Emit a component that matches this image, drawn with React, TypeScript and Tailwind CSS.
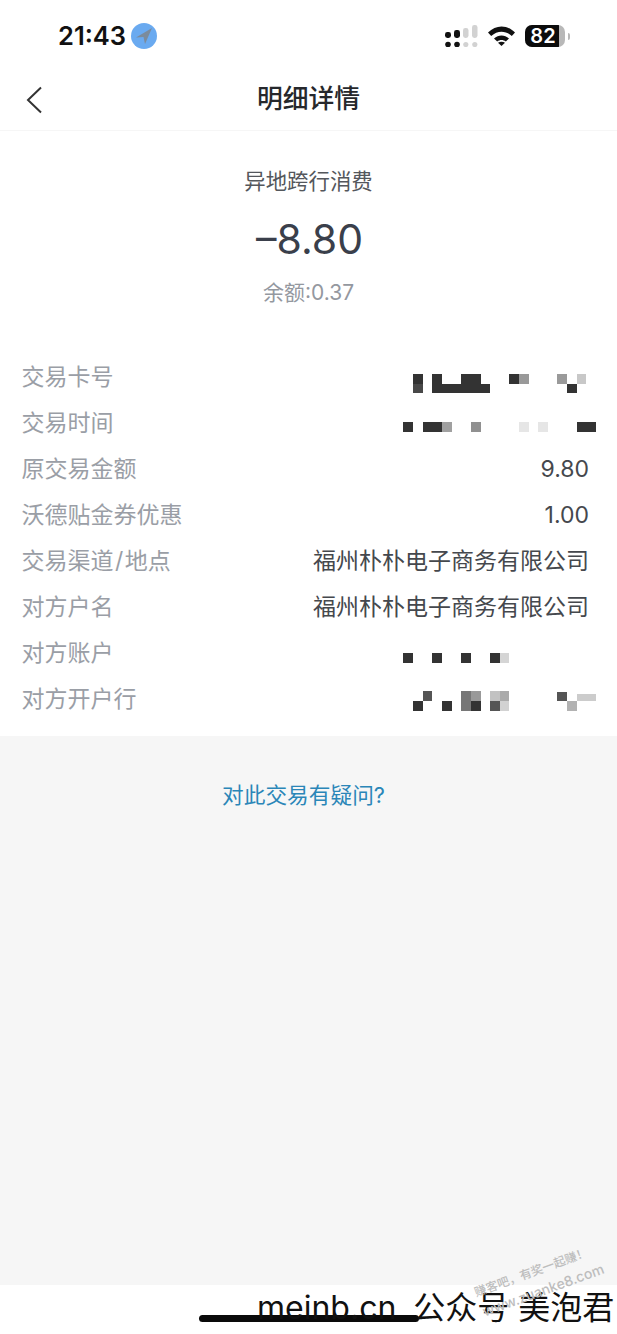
import React from 'react';

const cjk = { fontFamily: '"Inter", "Noto Sans CJK SC", sans-serif' };

type Block = [number, number, number, number, string];

const dark = '#333333';

// mosaic blocks over the masked values, x is page x and y is relative to the row
const cardBlocks: Block[] = [
    [413, 20, 10, 10, '#333333'],
    [413, 30, 10, 9, '#484848'],
    [432, 20, 10, 19, dark],
    [442, 30, 48, 9, dark],
    [461, 20, 20, 10, dark],
    [509, 20, 10, 10, dark],
    [519, 20, 10, 10, '#999999'],
    [557, 20, 10, 10, '#9a9a9a'],
    [567, 30, 10, 9, dark],
    [577, 20, 9, 10, '#c8c8c8'],
];

const timeBlocks: Block[] = [
    [403, 22, 10, 10, dark],
    [423, 22, 19, 10, dark],
    [442, 22, 10, 10, '#a0a0a0'],
    [471, 22, 10, 10, '#909090'],
    [519, 22, 10, 10, '#e6e6e6'],
    [538, 22, 10, 10, '#e6e6e6'],
    [577, 22, 19, 10, dark],
];

const accountBlocks: Block[] = [
    [403, 23, 10, 10, dark],
    [432, 23, 10, 10, dark],
    [461, 23, 10, 10, dark],
    [490, 23, 10, 10, dark],
    [500, 23, 9, 10, '#d5d5d5'],
];

const bankBlocks: Block[] = [
    [423, 15, 9, 10, '#555555'],
    [413, 25, 10, 10, dark],
    [442, 25, 10, 10, dark],
    [461, 15, 10, 20, '#777777'],
    [471, 15, 10, 10, '#999999'],
    [471, 25, 10, 10, dark],
    [490, 15, 10, 10, '#c2c2c2'],
    [500, 15, 9, 10, '#aaaaaa'],
    [490, 25, 10, 10, '#555555'],
    [500, 25, 9, 10, '#d2d2d2'],
    [557, 16, 10, 9, '#555555'],
    [567, 25, 10, 10, '#b2b2b2'],
    [577, 18, 19, 7, '#cccccc'],
];

function Mosaic({ blocks }: { blocks: Block[] }) {
    return (
        <svg className="absolute left-0 top-0" width="617" height="46" viewBox="0 0 617 46">
            {blocks.map(([x, y, w, h, fill], i) => (
                <rect key={i} x={x} y={y} width={w} height={h} fill={fill} />
            ))}
        </svg>
    );
}

function Row({ label, value, blocks }: { label: React.ReactNode; value?: string; blocks?: Block[] }) {
    return (
        <div className="relative flex h-[46px] items-center justify-between pl-[21.5px] pr-[28px] text-[23px] leading-[46px]">
            <span className="text-[#9a9ea6]">{label}</span>
            {value && <span className="text-[#45484d]">{value}</span>}
            {blocks && <Mosaic blocks={blocks} />}
        </div>
    );
}

function StatusBar() {
    return (
        <div className="flex h-[72px] items-center justify-between pl-[58px] pr-[47px]">
            <div className="flex items-center gap-[5px]">
                <span className="text-[25.5px] font-semibold leading-none text-[#111111]">21:43</span>
                <span className="block h-[26px] w-[26px] rounded-full bg-[#6aaaf0]">
                    <svg width="26" height="26" viewBox="0 0 26 26">
                        <path d="M21 5 L5 14.5 L12.5 14 L14 21 Z" fill="#7b8b9c" />
                    </svg>
                </span>
            </div>
            <div className="flex items-center gap-[10px]">
                <svg width="33" height="22" viewBox="0 0 33 22">
                    <rect x="0" y="7" width="6" height="6" rx="2.4" fill="#111" />
                    <rect x="9" y="5" width="6" height="8" rx="2.4" fill="#111" />
                    <rect x="18" y="3" width="5.5" height="10" rx="2.4" fill="#d2d2d2" />
                    <rect x="27" y="0" width="5.5" height="13" rx="2.4" fill="#d2d2d2" />
                    <circle cx="3" cy="19.5" r="2.8" fill="#111" />
                    <circle cx="12" cy="19.5" r="2.8" fill="#111" />
                    <circle cx="20.8" cy="19.5" r="2.6" fill="#d2d2d2" />
                    <circle cx="29.8" cy="19.5" r="2.6" fill="#d2d2d2" />
                </svg>
                <svg width="27" height="20" viewBox="0 0 27 20">
                    <path d="M0 6.5 C8 -1.5 19 -1.5 27 6.5 L23.8 10 C17.5 4.2 9.5 4.2 3.2 10 Z" fill="#111" />
                    <path d="M6 12.5 C10.5 8.6 16.5 8.6 21 12.5 L17.8 15.6 C15.2 13.6 11.8 13.6 9.2 15.6 Z" fill="#111" />
                    <path d="M13.5 20 L10 16.8 C12 15.4 15 15.4 17 16.8 Z" fill="#111" />
                </svg>
                <div className="flex items-center">
                    <div className="flex h-[22px] w-[40px] overflow-hidden rounded-[7px] bg-[#b8b8b8]">
                        <div className="flex w-[34px] items-center justify-center bg-[#0c0c0c] pl-[2px] text-[20px] font-semibold leading-none text-white">
                            82
                        </div>
                    </div>
                    <div className="ml-[3px] h-[7px] w-[2px] rounded-r-full bg-[#b8b8b8]" />
                </div>
            </div>
        </div>
    );
}

export default function App() {
    return (
        <div className="flex h-[1334px] w-[617px] flex-col overflow-hidden bg-white" style={cjk}>
            <StatusBar />

            {/* nav */}
            <div className="relative flex h-[59px] items-center justify-center border-b border-[#f6f6f6] pb-[4px]">
                <svg className="absolute left-[24px] top-[14px]" width="20" height="28" viewBox="0 0 20 28">
                    <path d="M17 1.5 L4 14 L17 26.5" fill="none" stroke="#333" strokeWidth="2" />
                </svg>
                <span className="text-[25.8px] font-medium leading-none text-[#26282c]">明细详情</span>
            </div>

            {/* amount */}
            <div className="flex flex-col items-center pt-[35px]">
                <div className="text-[21.4px] leading-[30px] text-[#54575c]">异地跨行消费</div>
                <div className="ml-[2px] mt-[14px] text-[41px] font-normal leading-[58px] text-[#3a3f4b]">–8.80</div>
                <div className="mt-[10px] text-[21px] leading-[30px] text-[#94989f]">余额:0.37</div>
            </div>

            {/* details */}
            <div className="pt-[46px]">
                <Row label="交易卡号" blocks={cardBlocks} />
                <Row label="交易时间" blocks={timeBlocks} />
                <Row label="原交易金额" value="9.80" />
                <Row label="沃德贴金券优惠" value="1.00" />
                <Row
                    label={
                        <>
                            交易渠道<span className="mx-[1.5px]">/</span>地点
                        </>
                    }
                    value="福州朴朴电子商务有限公司"
                />
                <Row label="对方户名" value="福州朴朴电子商务有限公司" />
                <Row label="对方账户" blocks={accountBlocks} />
                <Row label="对方开户行" blocks={bankBlocks} />
            </div>

            {/* help */}
            <div className="mt-[14px] flex-1 bg-[#f6f6f6] pt-[44px] text-center">
                <span className="mr-[10px] text-[21.7px] leading-[30px] text-[#2a86b8]">对此交易有疑问?</span>
            </div>

            {/* footer watermark */}
            <div className="relative h-[49px] shrink-0 bg-white">
                <div className="absolute left-[199px] top-[30px] h-[7px] w-[220px] rounded-full bg-[#0a0a0a]" />
                <div className="absolute left-[257px] top-[1px] whitespace-nowrap text-[32px] leading-[44px] text-[#111111]">
                    <span className="mr-[8px]">meinb.cn</span> 公众号 美泡君
                </div>
                <div className="absolute left-[475px] top-[1px] origin-left rotate-[-20deg] whitespace-nowrap text-[12px] font-medium leading-[14px] text-[#bdbdbd]">
                    赚客吧，有奖一起赚！
                </div>
                <div className="absolute left-[483px] top-[20px] origin-left rotate-[-20deg] whitespace-nowrap text-[14px] font-medium leading-[14px] text-[#bdbdbd]">
                    www.zuanke8.com
                </div>
            </div>
        </div>
    );
}
